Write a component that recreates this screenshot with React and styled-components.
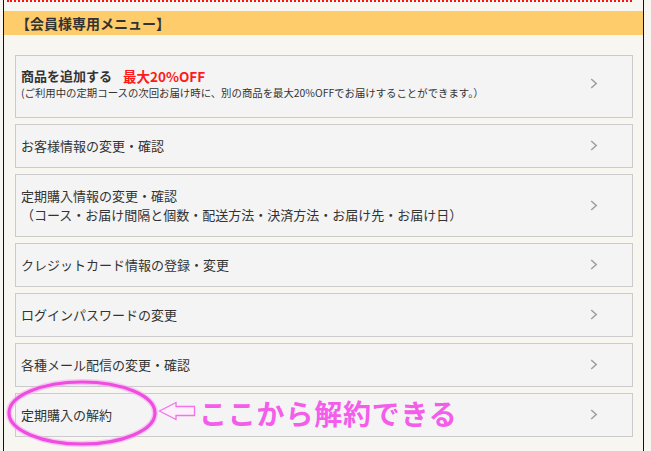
import React from 'react';
import styled, { createGlobalStyle } from 'styled-components';

const GlobalStyle = createGlobalStyle`
  body {
    margin: 0;
    background: #f7f6f1;
    font-family: "Noto Sans CJK JP", "Noto Sans", sans-serif;
    color: #333;
  }
`

const Page = styled.div`
  position: relative;
  width: 651px;
  height: 451px;
  overflow: hidden;
  padding-left: 3px;
  box-sizing: border-box;
`

const Frame = styled.div`
  width: 641px;
  height: 451px;
  box-sizing: border-box;
  border-left: 1px solid #111;
  border-right: 1px solid #111;
`

const DottedRule = styled.div`
  margin: 0 11px 0 3px;
  border-top: 2px dotted #ff1010;
`

const MenuHeader = styled.h2`
  margin: 9px 0 0;
  height: 24px;
  padding-left: 12px;
  background: #ffcc6c;
  font-size: 14px;
  line-height: 24px;
  font-weight: 700;
  color: #333;
`

const MenuList = styled.ul`
  list-style: none;
  margin: 20px 10px 0 11px;
  padding: 0;
  display: flex;
  flex-direction: column;
  gap: 6px;
`

const MenuItem = styled.li`
  display: flex;
  align-items: center;
  justify-content: space-between;
  background: #f4f4f4;
  border: 1px solid #cbcbcb;
  padding: ${p => (p.$tall ? '12px 0 18px 5px' : '11px 0 12px 5px')};
`

const ItemText = styled.div`
  font-size: 13px;
  line-height: 19px;
  color: #333;
`

const ItemTitle = styled.div`
  display: flex;
  align-items: center;
  height: 16px;
  font-size: 13px;
  line-height: 16px;
  font-weight: 700;
  color: #333;
`

const Sale = styled.span`
  color: #ff1a1a;
  font-size: 13.5px;
  margin-left: 11px;
`

const ItemNote = styled.div`
  margin-top: 3px;
  font-size: 10.4px;
  line-height: 12px;
  color: #333;
`

const Chevron = styled.svg`
  flex: none;
  margin-right: 34px;
`

const Ellipse = styled.svg`
  position: absolute;
  left: 5px;
  top: 378px;
  overflow: visible;
`

const Arrow = styled.svg`
  position: absolute;
  left: 158px;
  top: 401px;
`

const Note = styled.div`
  position: absolute;
  left: 199px;
  top: 397px;
  font-size: 28px;
  line-height: 32px;
  font-weight: 700;
  color: #f45de9;
  letter-spacing: 0.8px;
`

const items = [
  ['お客様情報の変更・確認'],
  ['定期購入情報の変更・確認', '（コース・お届け間隔と個数・配送方法・決済方法・お届け先・お届け日）'],
  ['クレジットカード情報の登録・変更'],
  ['ログインパスワードの変更'],
  ['各種メール配信の変更・確認'],
  ['定期購入の解約'],
]

function Arrowhead() {
  return (
    <Chevron width="8" height="11" viewBox="0 0 8 11">
      <polyline points="1.2,1 6.2,5.5 1.2,10" fill="none" stroke="#a0a0a0" strokeWidth="1.6" />
    </Chevron>
  )
}

export default function App() {
  return (
    <Page>
      <GlobalStyle />
      <Frame>
        <DottedRule />
        <MenuHeader>【会員様専用メニュー】</MenuHeader>
        <MenuList>
          <MenuItem $tall>
            <div>
              <ItemTitle>
                <span>商品を追加する</span>
                <Sale>最大20%OFF</Sale>
              </ItemTitle>
              <ItemNote>(ご利用中の定期コースの次回お届け時に、別の商品を最大20%OFFでお届けすることができます。）</ItemNote>
            </div>
            <Arrowhead />
          </MenuItem>
          {items.map(lines => (
            <MenuItem key={lines[0]}>
              <ItemText>
                {lines.map(l => (
                  <div key={l}>{l}</div>
                ))}
              </ItemText>
              <Arrowhead />
            </MenuItem>
          ))}
        </MenuList>
      </Frame>

      <Ellipse width="154" height="70" viewBox="0 0 154 70">
        <ellipse cx="77" cy="35" rx="73" ry="31" fill="none" stroke="#f7a8f0" strokeWidth="6" opacity="0.6" />
        <ellipse cx="77" cy="35" rx="73" ry="31" fill="none" stroke="#ee4de0" strokeWidth="3.2" />
      </Ellipse>

      <Arrow width="38" height="20" viewBox="0 0 38 20">
        <path d="M1.5,10 L18,1.5 L18,5.5 L36.5,5.5 L36.5,14.5 L18,14.5 L18,18.5 Z" fill="#fdf0fc" stroke="#f274e8" strokeWidth="1.3" strokeLinejoin="miter" />
      </Arrow>
      <Note>ここから解約できる</Note>
    </Page>
  )
}
